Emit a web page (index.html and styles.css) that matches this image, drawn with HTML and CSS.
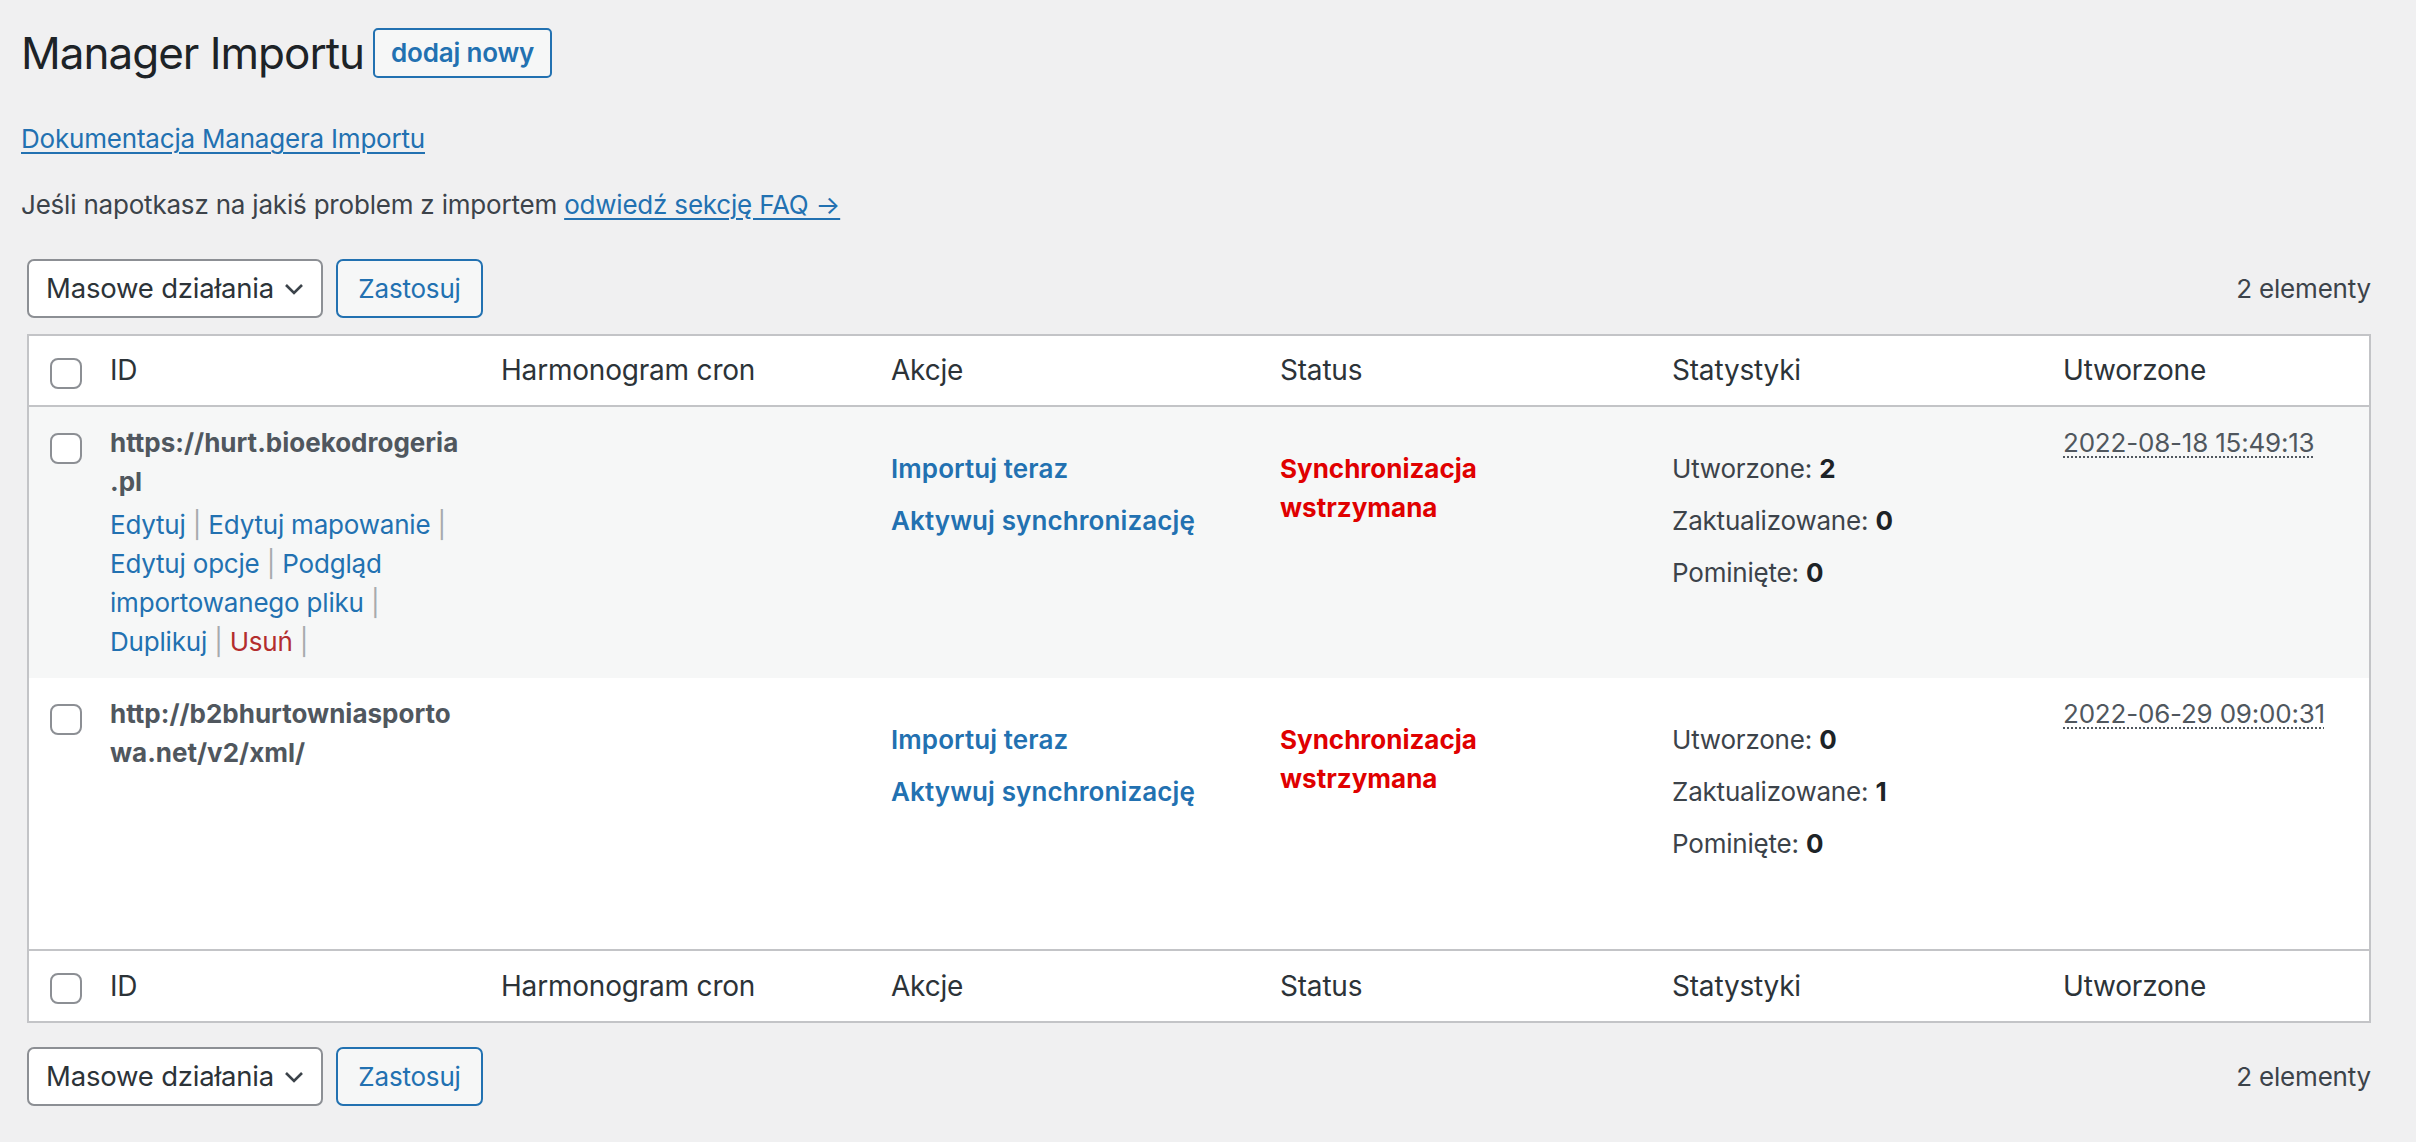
FILE: index.html
```html
<!DOCTYPE html>
<html lang="pl">
<head>
    <meta charset="UTF-8">
    <meta name="viewport" content="width=device-width, initial-scale=1.0">
    <title>Manager Importu</title>
    <link rel="stylesheet" href="styles.css">
</head>
<body>

    <div class="wrap">
        <!-- Page heading -->
        <div class="page-head">
            <h1>Manager Importu</h1>
            <a href="#" class="add-new">dodaj nowy</a>
        </div>

        <p class="doc-link"><a href="#">Dokumentacja Managera Importu</a></p>
        <p class="help">Jeśli napotkasz na jakiś problem z importem <a href="#">odwiedź sekcję FAQ →</a></p>

        <form class="list-form">
            <div class="tablenav top">
                <div class="bulk-select">
                    <span>Masowe działania</span>
                    <svg width="20" height="12" viewBox="0 0 20 12"><polyline points="2,2 10,10 18,2" fill="none" stroke="#3c434a" stroke-width="2.6"/></svg>
                </div>
                <button type="button" class="apply">Zastosuj</button>
                <span class="count">2 elementy</span>
            </div>

            <table class="items">
                <colgroup>
                    <col class="col-check">
                    <col class="col-id">
                    <col class="col-cron">
                    <col class="col-actions">
                    <col class="col-status">
                    <col class="col-stats">
                    <col>
                </colgroup>
                <thead>
                    <tr>
                        <th class="check"><input type="checkbox"></th>
                        <th>ID</th>
                        <th>Harmonogram cron</th>
                        <th>Akcje</th>
                        <th>Status</th>
                        <th>Statystyki</th>
                        <th>Utworzone</th>
                    </tr>
                </thead>
                <tbody>
                    <tr class="alt">
                        <td class="check"><input type="checkbox"></td>
                        <td>
                            <strong class="row-title">https://hurt.bioekodrogeria.pl</strong>
                            <div class="row-actions">
                                <a href="#">Edytuj</a> <span class="sep">|</span>
                                <a href="#">Edytuj mapowanie</a> <span class="sep">|</span>
                                <a href="#">Edytuj opcje</a> <span class="sep">|</span>
                                <a href="#">Podgląd importowanego pliku</a> <span class="sep">|</span>
                                <a href="#">Duplikuj</a> <span class="sep">|</span>
                                <a href="#" class="delete">Usuń</a> <span class="sep">|</span>
                            </div>
                        </td>
                        <td></td>
                        <td>
                            <div class="cell-list">
                                <p><a href="#" class="action">Importuj teraz</a></p>
                                <p><a href="#" class="action">Aktywuj synchronizację</a></p>
                            </div>
                        </td>
                        <td>
                            <div class="cell-list">
                                <p class="paused">Synchronizacja wstrzymana</p>
                            </div>
                        </td>
                        <td>
                            <div class="cell-list">
                                <p>Utworzone: <b>2</b></p>
                                <p>Zaktualizowane: <b>0</b></p>
                                <p>Pominięte: <b>0</b></p>
                            </div>
                        </td>
                        <td><abbr title="2022-08-18 15:49:13">2022-08-18 15:49:13</abbr></td>
                    </tr>
                    <tr>
                        <td class="check"><input type="checkbox"></td>
                        <td>
                            <strong class="row-title">http://b2bhurtowniasportowa.net/v2/xml/</strong>
                            <div class="row-actions hidden">
                                <a href="#">Edytuj</a> <span class="sep">|</span>
                                <a href="#">Edytuj mapowanie</a> <span class="sep">|</span>
                                <a href="#">Edytuj opcje</a> <span class="sep">|</span>
                                <a href="#">Podgląd importowanego pliku</a> <span class="sep">|</span>
                                <a href="#">Duplikuj</a> <span class="sep">|</span>
                                <a href="#" class="delete">Usuń</a> <span class="sep">|</span>
                            </div>
                        </td>
                        <td></td>
                        <td>
                            <div class="cell-list">
                                <p><a href="#" class="action">Importuj teraz</a></p>
                                <p><a href="#" class="action">Aktywuj synchronizację</a></p>
                            </div>
                        </td>
                        <td>
                            <div class="cell-list">
                                <p class="paused">Synchronizacja wstrzymana</p>
                            </div>
                        </td>
                        <td>
                            <div class="cell-list">
                                <p>Utworzone: <b>0</b></p>
                                <p>Zaktualizowane: <b>1</b></p>
                                <p>Pominięte: <b>0</b></p>
                            </div>
                        </td>
                        <td><abbr title="2022-06-29 09:00:31">2022-06-29 09:00:31</abbr></td>
                    </tr>
                </tbody>
                <tfoot>
                    <tr>
                        <th class="check"><input type="checkbox"></th>
                        <th>ID</th>
                        <th>Harmonogram cron</th>
                        <th>Akcje</th>
                        <th>Status</th>
                        <th>Statystyki</th>
                        <th>Utworzone</th>
                    </tr>
                </tfoot>
            </table>

            <div class="tablenav bottom">
                <div class="bulk-select">
                    <span>Masowe działania</span>
                    <svg width="20" height="12" viewBox="0 0 20 12"><polyline points="2,2 10,10 18,2" fill="none" stroke="#3c434a" stroke-width="2.6"/></svg>
                </div>
                <button type="button" class="apply">Zastosuj</button>
                <span class="count">2 elementy</span>
            </div>
        </form>
    </div>

</body>
</html>
```

FILE: styles.css
```css
* {
    box-sizing: border-box;
}

body {
    margin: 0;
    background-color: #f0f0f1;
    color: #3c434a;
    font-family: Inter, "Liberation Sans", sans-serif;
    font-size: 26px;
    line-height: 39px;
    letter-spacing: -0.2px;
}

a {
    color: #2271b1;
}

.wrap {
    padding: 21px 45px 0 21px;
}

/* Heading */
.page-head {
    display: flex;
    align-items: center;
    height: 64px;
}

.page-head h1 {
    margin: 0 9px 0 0;
    font-size: 44px;
    font-weight: 400;
    line-height: 64px;
    letter-spacing: -1px;
    color: #1d2327;
}

.add-new {
    height: 50px;
    padding: 0 16px;
    border: 2px solid #2271b1;
    border-radius: 5px;
    background-color: #f6f7f7;
    font-weight: 600;
    line-height: 46px;
    text-decoration: none;
}

.doc-link {
    margin: 34px 0 0;
}

.help {
    margin: 27px 0 0;
}

.doc-link a,
.help a {
    text-decoration-thickness: 2px;
    text-underline-offset: 4px;
}

/* Bulk actions bar */
.list-form {
    padding-left: 6px;
}

.tablenav {
    display: flex;
    align-items: center;
    height: 59px;
}

.tablenav.top {
    margin: 35px 0 16px;
}

.tablenav.bottom {
    margin-top: 24px;
}

.bulk-select {
    display: flex;
    align-items: center;
    justify-content: space-between;
    width: 296px;
    height: 59px;
    padding: 0 17px 0 17px;
    border: 2px solid #8c8f94;
    border-radius: 7px;
    background-color: #fff;
    color: #2c3338;
    font-size: 27.5px;
}

.apply {
    width: 147px;
    height: 59px;
    margin-left: 13px;
    border: 2px solid #2271b1;
    border-radius: 7px;
    background-color: #f6f7f7;
    color: #2271b1;
    font: inherit;
    letter-spacing: inherit;
}

.count {
    margin-left: auto;
}

/* List table */
.items {
    width: 100%;
    table-layout: fixed;
    border: 2px solid #c3c4c7;
    border-spacing: 0;
    background-color: #fff;
}

.col-check { width: 61px; }
.col-id { width: 391px; }
.col-cron { width: 390px; }
.col-actions { width: 389px; }
.col-status { width: 392px; }
.col-stats { width: 391px; }

.items th {
    padding: 16px 20px;
    font-size: 28px;
    font-weight: 400;
    line-height: 37px;
    text-align: left;
    color: #2c3338;
}

.items thead th {
    border-bottom: 2px solid #c3c4c7;
}

.items tfoot th {
    border-top: 2px solid #c3c4c7;
    line-height: 38px;
}

.items td {
    padding: 16px 20px 17px;
    vertical-align: top;
}

.items tr.alt td {
    background-color: #f6f7f7;
}

.items .check {
    padding: 0 0 0 21px;
    vertical-align: top;
}

.items input[type="checkbox"] {
    appearance: none;
    display: block;
    width: 32px;
    height: 31px;
    margin: 0;
    border: 2px solid #8c8f94;
    border-radius: 8px;
    background-color: #fff;
}

.items th.check input {
    margin-top: 22px;
}

.items td.check input {
    margin-top: 26px;
}

.row-title {
    display: block;
    color: #50575e;
    font-weight: 700;
    letter-spacing: 0;
    overflow-wrap: anywhere;
}

.row-actions {
    padding-top: 4px;
}

.row-actions.hidden {
    visibility: hidden;
}

.row-actions a {
    text-decoration: none;
}

.row-actions .delete {
    color: #b32d2e;
}

.sep {
    color: #a7aaad;
}

.cell-list {
    padding-top: 26px;
}

.cell-list p {
    margin: 0 0 13px;
}

.action {
    font-weight: 600;
    letter-spacing: 0.1px;
    text-decoration: none;
}

.paused {
    color: #e00000;
    font-weight: 700;
    letter-spacing: 0;
}

.cell-list b {
    color: #1d2327;
}

abbr {
    color: #50575e;
    text-decoration: underline dotted #50575e;
    text-decoration-thickness: 2px;
    text-underline-offset: 4px;
}
```
